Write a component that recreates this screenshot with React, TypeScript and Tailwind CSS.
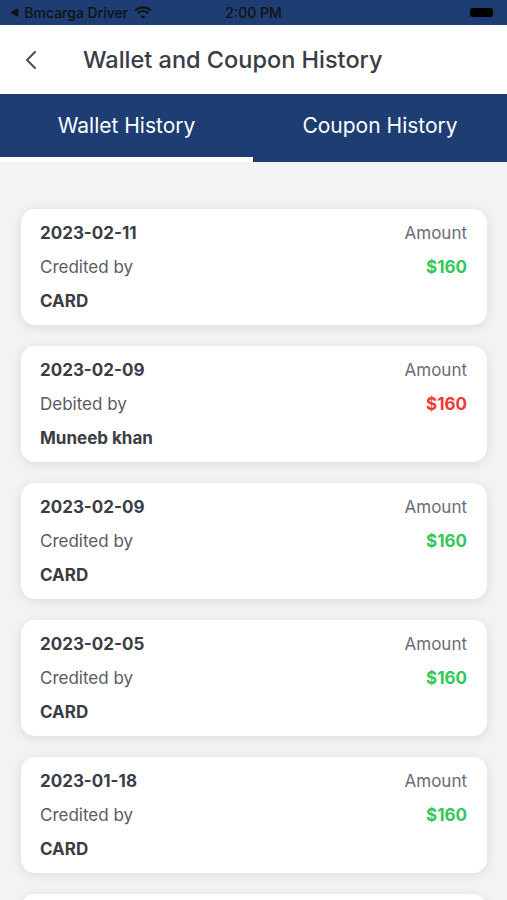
import React from "react";

type Item = { date: string; kind: string; by: string; credit: boolean };

const items: Item[] = [
  { date: "2023-02-11", kind: "Credited by", by: "CARD", credit: true },
  { date: "2023-02-09", kind: "Debited by", by: "Muneeb khan", credit: false },
  { date: "2023-02-09", kind: "Credited by", by: "CARD", credit: true },
  { date: "2023-02-05", kind: "Credited by", by: "CARD", credit: true },
  { date: "2023-01-18", kind: "Credited by", by: "CARD", credit: true },
  { date: "2023-01-12", kind: "Credited by", by: "CARD", credit: true },
];

function Wifi() {
  return (
    <svg width="18" height="13" viewBox="0 0 17 12" className="ml-[6px]">
      <path d="M8.5 2.2c2.6 0 5 1 6.8 2.7l1.3-1.4C14.4 1.4 11.6.2 8.5.2S2.6 1.4.4 3.5l1.3 1.4C3.5 3.2 5.9 2.2 8.5 2.2z" fill="#111" />
      <path d="M8.5 5.6c1.7 0 3.2.6 4.4 1.7l1.3-1.4C12.7 4.5 10.7 3.6 8.5 3.6s-4.2.9-5.7 2.3l1.3 1.4c1.2-1.1 2.7-1.7 4.4-1.7z" fill="#111" />
      <path d="M8.5 8.9c.8 0 1.5.3 2 .8l-2 2.1-2-2.1c.5-.5 1.2-.8 2-.8z" fill="#111" />
    </svg>
  );
}

export default function App() {
  return (
    <div className="w-[507px] h-[900px] overflow-hidden bg-[#f3f3f3] flex flex-col" style={{ fontFamily: "Inter, 'Noto Sans', sans-serif" }}>
      {/* status bar */}
      <div className="h-[25px] bg-[#1e3d73] flex items-center px-[10px] relative text-[#111] text-[14px] font-medium shrink-0">
        <div className="flex items-center">
          <span className="text-[10px] mr-[5px]">◀</span>
          <span>Bmcarga Driver</span>
          <Wifi />
        </div>
        <div className="absolute left-0 right-0 top-0 h-[25px] flex items-center justify-center pointer-events-none">
          <span>2:00 PM</span>
        </div>
        <div className="ml-auto flex items-center mr-[1px]">
          <div className="w-[23px] h-[9px] rounded-[3px] bg-[#000]" />
          <div className="w-[2px] h-[4px] bg-[#333] rounded-r-sm ml-[1px]" />
        </div>
      </div>

      {/* header */}
      <div className="h-[69px] bg-white flex items-center shrink-0">
        <div className="w-[83px] pl-[24px] flex items-center">
          <svg width="14" height="20" viewBox="0 0 14 20">
            <path d="M11 2 L3 10 L11 18" fill="none" stroke="#4a4d57" strokeWidth="2" strokeLinecap="round" strokeLinejoin="round" />
          </svg>
        </div>
        <div className="text-[23.5px] font-medium text-[#3a3c45]">Wallet and Coupon History</div>
      </div>

      {/* tabs */}
      <div className="h-[68px] bg-[#1e3d73] flex shrink-0">
        <div className="w-[253px] flex flex-col">
          <div className="flex-1 flex items-center justify-center text-white text-[21px] font-normal">Wallet History</div>
          <div className="h-[5px] bg-white" />
        </div>
        <div className="flex-1 flex items-center justify-center text-white text-[21px] font-normal pb-[5px]">Coupon History</div>
      </div>

      {/* list */}
      <div className="flex flex-col gap-[21px] pt-[47px] pl-[21px] pr-[20px]">
        {items.map((it, i) => (
          <div
            key={i}
            className="bg-white rounded-[14px] py-[7px] pl-[19px] pr-[20px] shrink-0 shadow-[0_2px_12px_rgba(0,0,0,0.10)]"
          >
            <div className="flex justify-between leading-[34px]">
              <span className="text-[17px] font-bold text-[#3b3d46]">{it.date}</span>
              <span className="text-[17px] text-[#6b6c78]">Amount</span>
            </div>
            <div className="flex justify-between leading-[34px]">
              <span className="text-[17px] text-[#5a5b63]">{it.kind}</span>
              <span className={"text-[17px] font-bold " + (it.credit ? "text-[#34c759]" : "text-[#f5382f]")}>$160</span>
            </div>
            <div className="leading-[34px] text-[17px] font-bold text-[#3b3d46]">{it.by}</div>
          </div>
        ))}
      </div>
    </div>
  );
}
